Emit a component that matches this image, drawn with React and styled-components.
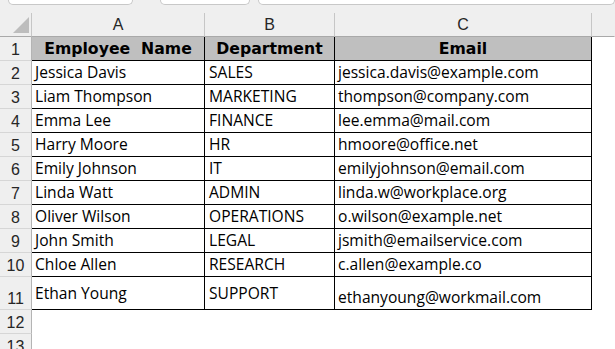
import React from 'react';
import styled, { createGlobalStyle } from 'styled-components';

const rows = [
  { name: 'Jessica Davis', dept: 'SALES', email: 'jessica.davis@example.com' },
  { name: 'Liam Thompson', dept: 'MARKETING', email: 'thompson@company.com' },
  { name: 'Emma Lee', dept: 'FINANCE', email: 'lee.emma@mail.com' },
  { name: 'Harry Moore', dept: 'HR', email: 'hmoore@office.net' },
  { name: 'Emily Johnson', dept: 'IT', email: 'emilyjohnson@email.com' },
  { name: 'Linda Watt', dept: 'ADMIN', email: 'linda.w@workplace.org' },
  { name: 'Oliver Wilson', dept: 'OPERATIONS', email: 'o.wilson@example.net' },
  { name: 'John Smith', dept: 'LEGAL', email: 'jsmith@emailservice.com' },
  { name: 'Chloe Allen', dept: 'RESEARCH', email: 'c.allen@example.co' },
  { name: 'Ethan Young', dept: 'SUPPORT', email: 'ethanyoung@workmail.com', tall: true },
];

const GlobalStyle = createGlobalStyle`
  html, body {
    margin: 0;
    padding: 0;
    background: #ffffff;
    overflow: hidden;
  }
  body {
    font-family: "Liberation Sans", Arial, sans-serif;
  }
`;

const TopBar = styled.div`
  height: 13px;
  background: #efefef;
  display: flex;
  align-items: flex-start;
  padding-left: 8px;
  box-sizing: border-box;
`;

const Tab = styled.div`
  width: ${({ $w }) => ($w ? `${$w}px` : 'auto')};
  flex: ${({ $w }) => ($w ? 'none' : '1')};
  margin-right: ${({ $gap }) => $gap || 0}px;
  height: 5px;
  background: #ffffff;
  border: 1px solid #c8c8c8;
  border-top: none;
  border-radius: 0 0 6px 6px;
  box-sizing: border-box;
`;

const Sheet = styled.div`
  display: grid;
  grid-template-columns: 32px 173px 130px 257px 1fr;
  grid-template-rows: 24px repeat(10, 24px) 33px 24px 24px;
`;

const Corner = styled.div`
  background: #efefef;
  border-right: 1px solid #c6c6c6;
  border-bottom: 1px solid #a9a9a9;
  box-sizing: border-box;
  position: relative;

  svg {
    position: absolute;
    right: 1px;
    bottom: 3px;
  }
`;

const ColHead = styled.div`
  background: #efefef;
  border-right: 1px solid ${({ $last }) => ($last ? 'transparent' : '#c6c6c6')};
  border-bottom: 1px solid #a9a9a9;
  box-sizing: border-box;
  display: flex;
  align-items: center;
  justify-content: center;
  font-size: 16px;
  line-height: 18px;
  color: #262626;
`;

const RowHead = styled.div`
  background: #efefef;
  border-right: 1px solid #b4b4b4;
  border-bottom: 1px solid #d6d6d6;
  box-sizing: border-box;
  display: flex;
  align-items: flex-end;
  justify-content: center;
  padding-bottom: 1px;
  font-size: 16px;
  line-height: 18px;
  color: #262626;
`;

const HeadCell = styled.div`
  background: #bfbfbf;
  border-right: 1px solid #000;
  border-bottom: 1px solid #000;
  box-sizing: border-box;
  display: flex;
  align-items: center;
  justify-content: center;
  font-family: "DejaVu Sans", sans-serif;
  font-weight: bold;
  font-size: 15.7px;
  line-height: 18px;
  color: #000;
  white-space: pre;
`;

const Cell = styled.div`
  background: #fff;
  border-right: 1px solid #000;
  border-bottom: 1px solid #000;
  box-sizing: border-box;
  display: flex;
  align-items: ${({ $middle }) => ($middle ? 'center' : 'flex-end')};
  padding: 0 0 ${({ $middle }) => ($middle ? 0 : 3)}px ${({ $pad }) => $pad || 3}px;
  font-family: "Open Sans", "Liberation Sans", sans-serif;
  font-size: 15.6px;
  line-height: 18px;
  color: #000;
  white-space: nowrap;
  overflow: hidden;
`;

const Blank = styled.div`
  background: #fff;
`;

const App = () => (
  <>
    <GlobalStyle />
    <TopBar>
      <Tab $w={125} $gap={27} />
      <Tab $w={90} $gap={8} />
      <Tab />
    </TopBar>
    <Sheet>
      <Corner>
        <svg width="18" height="16" viewBox="0 0 18 16">
          <polygon points="1,16 17,16 17,0" fill="#bdbdbd" />
        </svg>
      </Corner>
      <ColHead>A</ColHead>
      <ColHead>B</ColHead>
      <ColHead>C</ColHead>
      <ColHead $last />

      <RowHead>1</RowHead>
      <HeadCell>Employee  Name</HeadCell>
      <HeadCell>Department</HeadCell>
      <HeadCell>Email</HeadCell>
      <Blank />

      {rows.map((r, i) => (
        <React.Fragment key={r.name}>
          <RowHead>{i + 2}</RowHead>
          <Cell $middle={r.tall}>{r.name}</Cell>
          <Cell $middle={r.tall} $pad={4}>{r.dept}</Cell>
          <Cell $pad={3}>{r.email}</Cell>
          <Blank />
        </React.Fragment>
      ))}

      <RowHead>12</RowHead>
      <Blank />
      <Blank />
      <Blank />
      <Blank />
      <RowHead>13</RowHead>
      <Blank />
      <Blank />
      <Blank />
      <Blank />
    </Sheet>
  </>
);

export default App;
